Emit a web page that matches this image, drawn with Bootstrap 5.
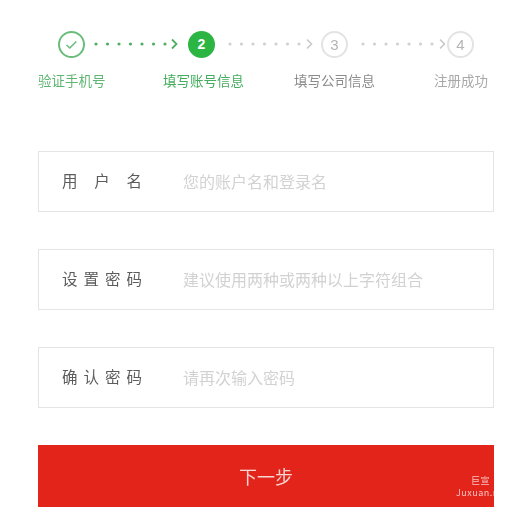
<!DOCTYPE html>
<html lang="zh-CN">
<head>
<meta charset="utf-8">
<title>注册</title>
<link href="https://cdn.jsdelivr.net/npm/bootstrap@5.3.0/dist/css/bootstrap.min.css" rel="stylesheet">
<style>
html,body{height:524px;overflow:hidden;background:#fff;}
body{font-family:"Noto Sans CJK SC","Liberation Sans",sans-serif;}
.page-wrap{position:relative;width:524px;height:524px;padding:29px 30px 0 38px;filter:blur(.6px);}
.step-track{height:30px;margin-left:20px;}
.step-num{width:27px;height:27px;flex:none;border-radius:50%;font:700 14px/1 "Liberation Sans",sans-serif;}
.step-done{border:2px solid #6bbd7c;}
.step-now{background:#2cb543;color:#fff;}
.step-todo{border:2px solid #e3e3e3;color:#b5b5b5;font-weight:400;font-size:15px;}
.dot-line{flex:none;}
.step-labels{margin-top:11px;height:20px;font-size:13.5px;line-height:20px;}
.lbl-done{color:#5fb673;width:69px;}
.lbl-now{color:#45ad5e;margin-left:56px;width:82px;}
.lbl-todo{color:#8c8c8c;}
.lbl-3{margin-left:49px;width:82px;}
.lbl-4{margin-left:58px;width:56px;color:#a8a8a8;}
.field-row{height:61px;border:1px solid #e4e4e4;padding-left:23px;margin-bottom:37px;}
.field-row:first-of-type{margin-top:61px;}
.field-name{width:80px;flex:none;color:#5c5c5c;font-size:15.5px;line-height:20px;padding-bottom:3px;text-align:justify;text-align-last:justify;}
.field-row .form-control{border:0;box-shadow:none;background:transparent;padding:0 0 1px 41px;font-size:16px;color:#555;}
.field-row .form-control::placeholder{color:#d2d2d2;opacity:1;}
.next-btn{height:62px;margin-top:37px;background:#e3241a;border:0;border-radius:0;color:#f6d5d2;font-size:18px;}
.next-btn:hover{background:#e3241a;color:#f6d5d2;}
.mark-text{position:absolute;left:456px;top:475px;white-space:nowrap;color:rgba(255,255,255,.72);font-size:9px;line-height:12px;letter-spacing:.5px;}
.mark-text div:first-child{padding-left:15px;}
</style>
</head>
<body>
<div class="page-wrap">
  <div class="step-track d-flex align-items-center">
    <div class="step-num step-done d-flex align-items-center justify-content-center">
      <svg width="15" height="15" viewBox="0 0 15 15"><path d="M2.5 8l3.3 3 6.5-6.5" fill="none" stroke="#6bbd7c" stroke-width="1.6"/></svg>
    </div>
    <svg class="dot-line" width="103" height="14" viewBox="0 0 103 14"><g fill="#4fb065"><circle cx="11" cy="7" r="1.6"/><circle cx="22.500" cy="7" r="1.6"/><circle cx="34" cy="7" r="1.600"/><circle cx="45.500" cy="7" r="1.600"/><circle cx="57" cy="7" r="1.600"/><circle cx="68.500" cy="7" r="1.600"/><circle cx="80" cy="7" r="1.600"/></g><path d="M87 2.500l4.500 4.500-4.500 4.500" fill="none" stroke="#4fb065" stroke-width="1.800"/></svg>
    <div class="step-num step-now d-flex align-items-center justify-content-center">2</div>
    <svg class="dot-line" width="106" height="14" viewBox="0 0 106 14"><g fill="#d0d0d0"><circle cx="15" cy="7" r="1.600"/><circle cx="26.500" cy="7" r="1.600"/><circle cx="38" cy="7" r="1.600"/><circle cx="49.500" cy="7" r="1.600"/><circle cx="61" cy="7" r="1.600"/><circle cx="72.500" cy="7" r="1.600"/><circle cx="84" cy="7" r="1.600"/></g><path d="M92 2.500l4.500 4.500-4.500 4.500" fill="none" stroke="#c8c8c8" stroke-width="1.600"/></svg>
    <div class="step-num step-todo d-flex align-items-center justify-content-center">3</div>
    <svg class="dot-line" width="99" height="14" viewBox="0 0 99 14"><g fill="#d0d0d0"><circle cx="15" cy="7" r="1.600"/><circle cx="26.500" cy="7" r="1.600"/><circle cx="38" cy="7" r="1.600"/><circle cx="49.500" cy="7" r="1.600"/><circle cx="61" cy="7" r="1.600"/><circle cx="72.500" cy="7" r="1.600"/><circle cx="84" cy="7" r="1.600"/></g><path d="M92 2.500l4.500 4.500-4.500 4.500" fill="none" stroke="#c8c8c8" stroke-width="1.600"/></svg>
    <div class="step-num step-todo d-flex align-items-center justify-content-center">4</div>
  </div>
  <div class="step-labels d-flex text-nowrap">
    <div class="lbl-done">验证手机号</div>
    <div class="lbl-now">填写账号信息</div>
    <div class="lbl-todo lbl-3">填写公司信息</div>
    <div class="lbl-todo lbl-4">注册成功</div>
  </div>
  <form>
    <div class="field-row d-flex align-items-center">
      <span class="field-name">用户名</span>
      <input class="form-control" type="text" placeholder="您的账户名和登录名">
    </div>
    <div class="field-row d-flex align-items-center">
      <span class="field-name">设置密码</span>
      <input class="form-control" type="password" placeholder="建议使用两种或两种以上字符组合">
    </div>
    <div class="field-row d-flex align-items-center">
      <span class="field-name">确认密码</span>
      <input class="form-control" type="password" placeholder="请再次输入密码">
    </div>
    <button type="button" class="btn next-btn w-100 d-block">下一步</button>
  </form>
  <div class="mark-text"><div>巨宣</div><div>Juxuan.n</div></div>
</div>
<script src="https://cdn.jsdelivr.net/npm/bootstrap@5.3.0/dist/js/bootstrap.bundle.min.js"></script>
</body>
</html>
